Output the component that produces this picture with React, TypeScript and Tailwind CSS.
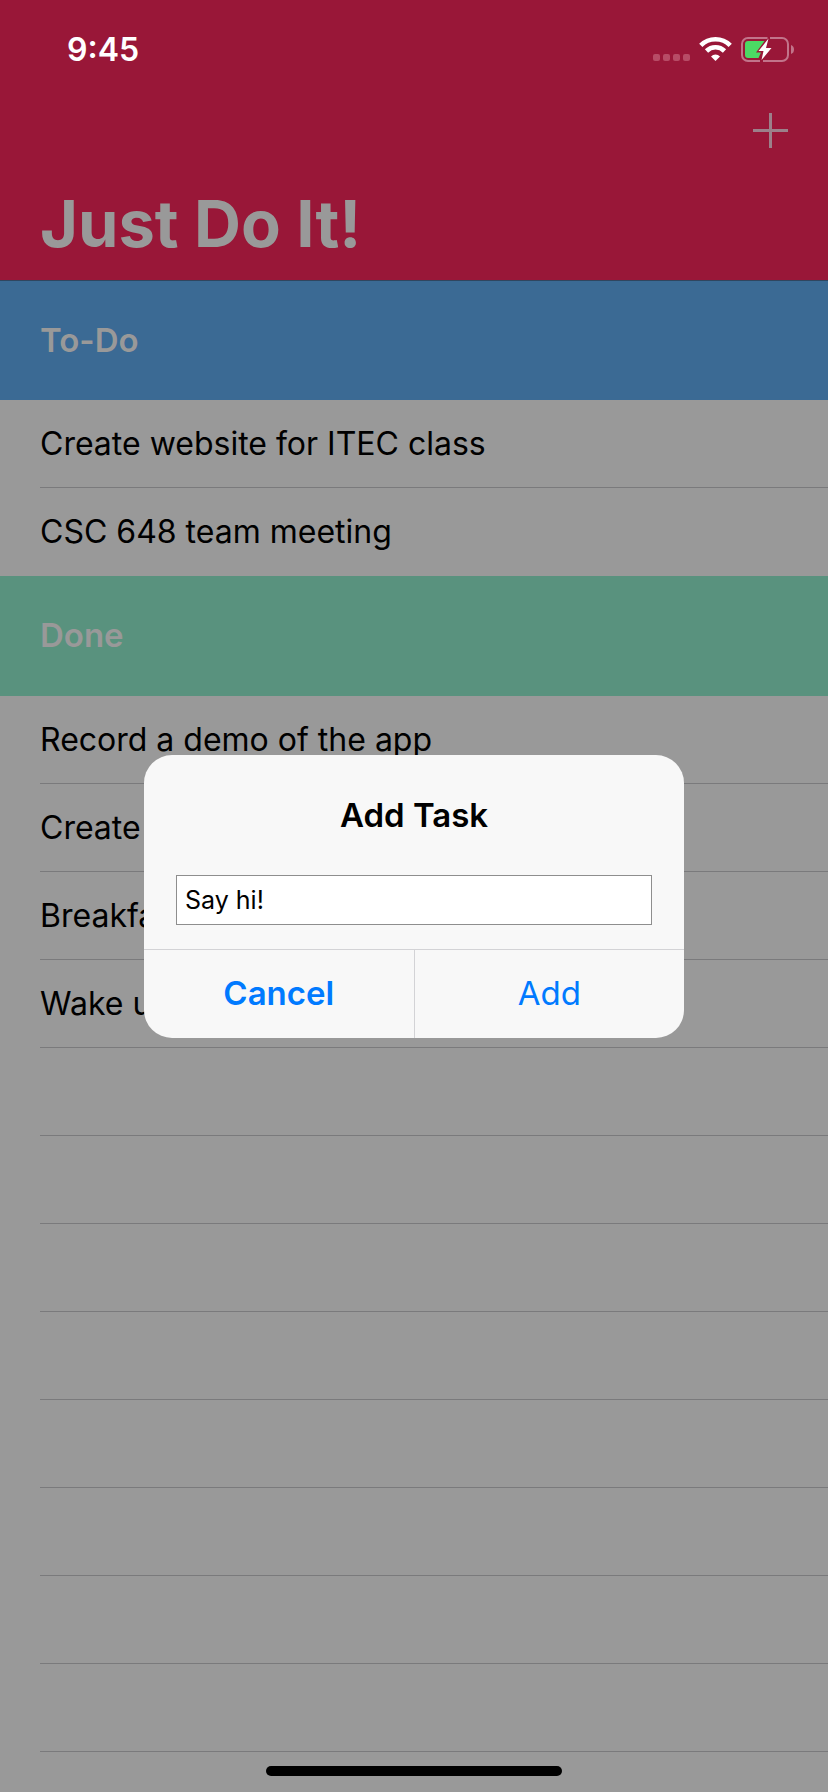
import { useState } from "react";

const todo = ["Create website for ITEC class", "CSC 648 team meeting"];
const done = ["Record a demo of the app", "Create", "Breakfast", "Wake up"];
const emptyRows = 8;

function StatusIcons() {
  return (
    <svg className="h-7 w-[142px]" viewBox="0 0 142 28" fill="none" aria-label="Wi-Fi on, battery charging">
      <g fill="#b74c66">
        <rect x="0" y="20" width="7" height="7" rx="2" />
        <rect x="10" y="20" width="7" height="7" rx="2" />
        <rect x="20" y="20" width="7" height="7" rx="2" />
        <rect x="30" y="20" width="7" height="7" rx="2" />
      </g>
      <g stroke="#fff" strokeWidth="4.6">
        <path d="M47.8 11.300A20.750 20.750 0 0 1 77.200 11.300" />
        <path d="M53.500 17A12.750 12.750 0 0 1 71.500 17" />
      </g>
      <path d="M62.500 27L58 22.400A6.300 6.300 0 0 1 67 22.400z" fill="#fff" />
      <path
        d="M114.500 4H95A6 6 0 0 0 89 10V21A6 6 0 0 0 95 27H107M117 4H129A6 6 0 0 1 135 10V21A6 6 0 0 1 129 27H110"
        stroke="#c2748a"
        strokeWidth="2"
      />
      <path d="M138 11v9q3-1 3-4.500t-3-4.500z" fill="#c2748a" />
      <path d="M95 7H111.500L103 18.500H108L105.500 24H95A3 3 0 0 1 92 21V10A3 3 0 0 1 95 7z" fill="#4cd964" />
      <path d="M115.500 4.500L105.500 17H110.500L108.500 26L118.500 14H113z" fill="#fff" />
    </svg>
  );
}

function SectionTitle({ children, className }: { children: string; className: string }) {
  return (
    <h2 className={`flex items-center px-10 text-[33px] font-semibold text-[#999] ${className}`}>
      {children}
    </h2>
  );
}

function Row({ text, last }: { text?: string; last?: boolean }) {
  return (
    <li className={`ml-10 flex h-[88px] items-center text-[32px] ${last ? "" : "border-b border-[#7a7a7c]"}`}>
      {text}
    </li>
  );
}

export default function App() {
  const [task, setTask] = useState("Say hi!");
  return (
    <div className="relative min-h-screen bg-[#999] font-['Inter',sans-serif] text-black">
      <header className="flex h-[281px] flex-col border-b border-[#2f4660] bg-[#991738]">
        <div className="flex items-start justify-between pt-[34px] pr-[33px] pl-[67px] text-white">
          <time className="text-[32px] leading-8 font-semibold">9:45</time>
          <StatusIcons />
        </div>
        <div className="mt-[43px] flex justify-end pr-9">
          <button type="button" aria-label="Add task" className="p-1">
            <svg className="size-[35px]" viewBox="0 0 35 35" stroke="#9c808a" strokeWidth="3">
              <path d="M17.500 0v35M0 17.500h35" />
            </svg>
          </button>
        </div>
        <h1 className="mt-auto px-10 pb-4 text-[65px] leading-[80px] font-bold text-[#999]">Just Do It!</h1>
      </header>

      <main>
        <SectionTitle className="h-[119px] bg-[#3b6a94]">To-Do</SectionTitle>
        <ul>
          {todo.map((text, i) => (
            <Row key={text} text={text} last={i === todo.length - 1} />
          ))}
        </ul>
        <SectionTitle className="h-[120px] bg-[#59927e]">Done</SectionTitle>
        <ul>
          {done.map((text) => (
            <Row key={text} text={text} />
          ))}
          {Array.from({ length: emptyRows }, (_, i) => (
            <Row key={i} />
          ))}
        </ul>
      </main>

      <div className="absolute inset-x-0 bottom-4 flex justify-center">
        <div className="h-[10px] w-[296px] rounded-full bg-black" />
      </div>

      <div className="absolute inset-0 flex items-center justify-center">
        <form
          role="dialog"
          aria-labelledby="dialog-title"
          onSubmit={(e) => e.preventDefault()}
          className="w-[540px] overflow-hidden rounded-[28px] bg-[#f8f8f8]"
        >
          <div className="px-8 pt-10 pb-6">
            <h2 id="dialog-title" className="text-center text-[33px] leading-10 font-semibold">
              Add Task
            </h2>
            <input
              aria-label="Task"
              value={task}
              onChange={(e) => setTask(e.target.value)}
              className="mt-10 block h-[50px] w-full border border-[#8e8e8e] bg-white px-2 text-[25px] outline-none"
            />
          </div>
          <div className="flex border-t border-[#d3d3d6] text-[33px] text-[#007aff]">
            <button type="button" className="h-[88px] flex-1 font-semibold">
              Cancel
            </button>
            <button type="submit" className="h-[88px] flex-1 border-l border-[#d3d3d6]">
              Add
            </button>
          </div>
        </form>
      </div>
    </div>
  );
}
